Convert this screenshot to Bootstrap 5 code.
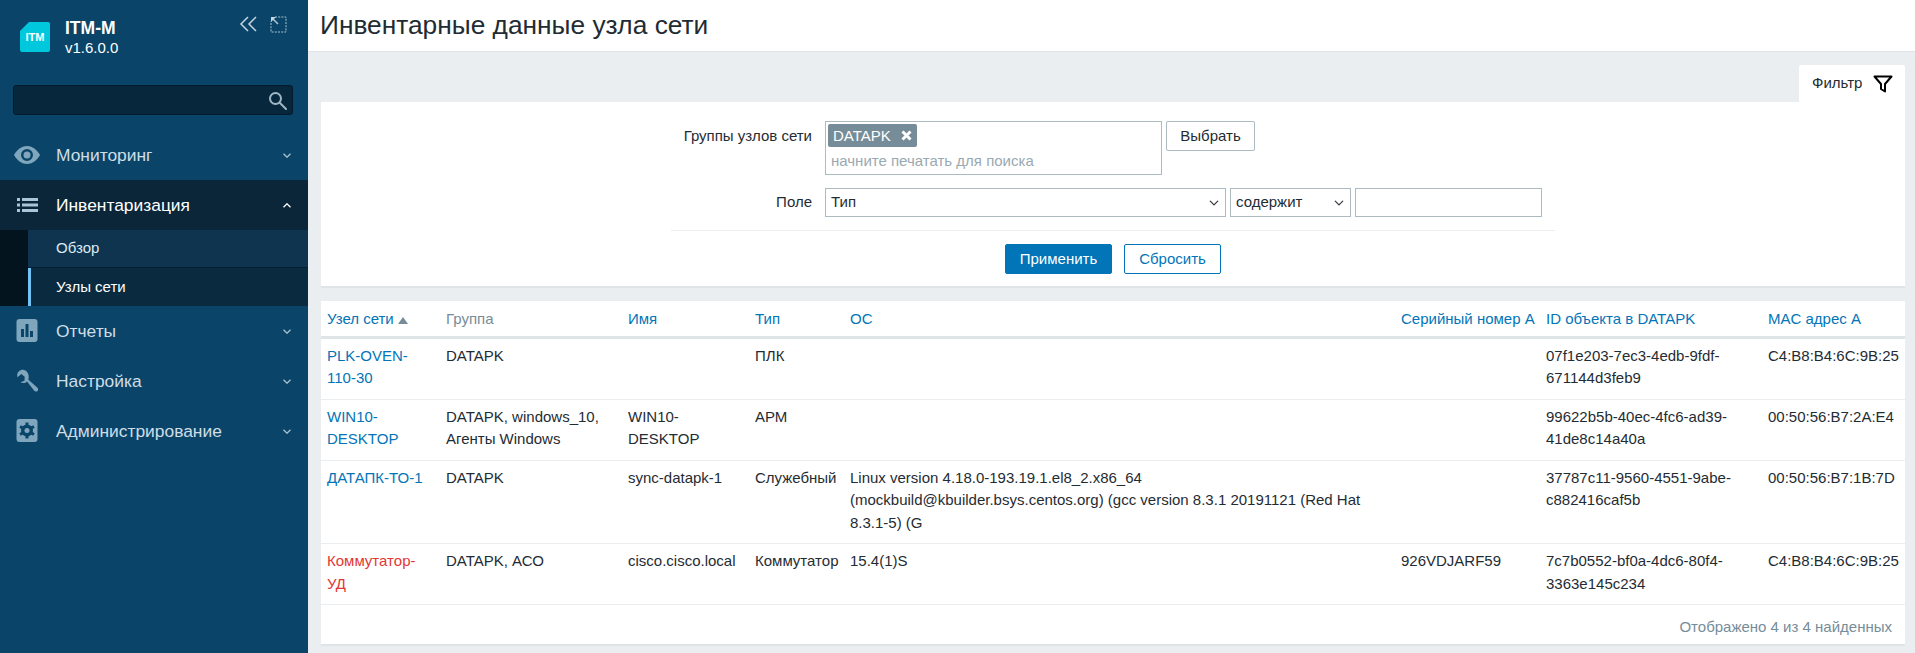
<!DOCTYPE html>
<html lang="ru">
<head>
    <meta charset="UTF-8">
    <meta name="viewport" content="width=device-width, initial-scale=1.0">
    <title>Инвентарные данные узла сети</title>
    <link rel="stylesheet" href="https://cdn.jsdelivr.net/npm/bootstrap@5.3.2/dist/css/bootstrap.min.css">
    <style>
        html, body { height: 100%; }
        body {
            font-family: "Liberation Sans", Arial, sans-serif;
            font-size: 15px;
            color: #1f2c33;
            background: #ebeef0;
            overflow: hidden;
        }
        /* sidebar */
        .side {
            width: 308px;
            flex: 0 0 308px;
            background: #0a4569;
            color: #fff;
        }
        .side-top { height: 85px; padding: 22px 20px 0; position: relative; }
        .logo-box {
            width: 30px;
            height: 30px;
            background: #00c8dc;
            color: #fff;
            font-size: 11px;
            font-weight: 700;
            border-radius: 2px;
            clip-path: polygon(30% 0, 100% 0, 100% 100%, 0 100%, 0 30%);
            padding-top: 8px;
            line-height: 14px;
        }
        .brand-txt { line-height: 19px; margin-left: 15px; margin-top: -3px; font-size: 15px; }
        .brand-txt b { font-size: 17.5px; }
        .side-tools { position: absolute; top: 16px; left: 239px; gap: 12px; }
        .side-search {
            height: 30px;
            margin: 0 13px 0 13px;
            background: #07283c;
            border: 1px solid #041a28;
            border-radius: 3px;
            padding-right: 5px;
            width: 280px;
        }
        .side-menu { margin-top: 15px; }
        .menu-item {
            height: 50px;
            padding-left: 13px;
            padding-right: 17px;
            font-size: 17.4px;
            color: #cfdde6;
        }
        .menu-item.opened { background: #0a2638; color: #fff; }
        .menu-ico { width: 28px; height: 24px; margin-right: 15px; flex: none; }
        .sub-wrap { background: #04141f; padding-left: 28px; }
        .sub-item {
            height: 38px;
            padding-left: 28px;
            background: #0e3450;
            color: #dfeaf1;
            border-bottom: 1px solid #06202f;
        }
        .sub-item.current {
            background: #0a2a40;
            color: #fff;
            border-bottom: 0;
            border-left: 3px solid #73c2f5;
            padding-left: 25px;
        }
        /* content */
        .page-head {
            height: 52px;
            background: #fff;
            border-bottom: 1px solid #dfe4e7;
            padding-left: 12px;
        }
        .page-head h1 { font-size: 26.3px; font-weight: 400; margin: 0; color: #1f2c33; }
        .page-body { padding: 13px 10px 0 13px; }
        .filter-tab {
            width: 106px;
            height: 37px;
            background: #fff;
            border-radius: 2px 2px 0 0;
            padding-left: 13px;
            gap: 11px;
        }
        .filter-panel {
            height: 186px;
            background: #fff;
            border-bottom: 2px solid #dfe4e7;
            padding-top: 19px;
        }
        .filter-inner { width: 884px; }
        .f-label { width: 141px; margin-right: 13px; text-align: right; flex: none; }
        .multi-box {
            width: 337px;
            height: 54px;
            border: 1px solid #acbbc2;
            padding: 2px;
        }
        .tag-item {
            background: #768d99;
            color: #fff;
            font-size: 15px;
            font-weight: 400;
            border-radius: 2px;
            height: 23px;
            line-height: 23px;
            padding: 0 5px;
            width: 89px;
        }
        .multi-hint { color: #9aa9b1; padding: 6px 3px 0; line-height: 16px; }
        .pick-btn {
            width: 89px;
            height: 30px;
            margin-left: 4px;
            padding: 0;
            font-size: 15px;
            color: #1f2c33;
            border: 1px solid #acbbc2;
            border-radius: 2px;
            background: #fff;
        }
        .field-row { margin-top: 13px; padding-bottom: 13px; border-bottom: 1px solid #ebeef0; }
        .field-ctl {
            height: 29px;
            border: 1px solid #acbbc2;
            border-radius: 0;
            font-size: 15px;
            color: #1f2c33;
            padding: 0 20px 0 5px;
            background-size: 12px 10px;
            background-position: right 5px center;
        }
        .ctl-a { width: 401px; }
        .ctl-b { width: 121px; margin-left: 4px; }
        .ctl-c { width: 187px; margin-left: 4px; padding-right: 4px; }
        .act-row { margin-top: 13px; gap: 12px; }
        .act-btn { height: 30px; padding: 0; font-size: 15px; border-radius: 2px; }
        .act-apply { width: 107px; background: #0275b8; border: 1px solid #0275b8; color: #fff; }
        .act-reset { width: 97px; background: #fff; border: 1px solid #0275b8; color: #0275b8; }
        /* table */
        .data-card {
            margin-top: 13px;
            height: 345px;
            background: #fff;
            border-bottom: 2px solid #dfe4e7;
        }
        .inv-table { table-layout: fixed; width: 1584px; margin: 0; font-size: 15px; --bs-table-color: #1f2c33; }
        .inv-table th {
            font-weight: 400;
            height: 36px;
            padding: 1px 6px 0;
            vertical-align: middle;
            border-bottom: 3px solid #dfe4e7;
            color: #0275b8;
            white-space: nowrap;
        }
        .inv-table td {
            padding: 6px 6px 9px;
            line-height: 22.5px;
            vertical-align: top;
            border-bottom: 1px solid #ebeef0;
        }
        .inv-table a { color: #0275b8; text-decoration: none; }
        .inv-table a.host-bad { color: #e33734; }
        .th-muted { color: #768d99 !important; }
        .sort-up {
            display: inline-block;
            border: 5px solid transparent;
            border-top: 0;
            border-bottom: 7px solid #768d99;
            margin-left: 4px;
        }
        .w-host { width: 119px; }
        .w-group { width: 182px; }
        .w-name { width: 127px; }
        .w-type { width: 95px; }
        .w-os { width: 551px; }
        .w-serial { width: 145px; }
        .w-id { width: 222px; }
        .w-mac { width: 143px; }
        .tbl-foot { color: #768d99; text-align: right; padding: 12px 13px 0 0; line-height: 20px; }
    </style>
</head>
<body>
<div class="d-flex h-100">
    <aside class="side">
        <div class="side-top d-flex">
            <div class="logo-box text-center">ITM</div>
            <div class="brand-txt"><b>ITM-M</b><br>v1.6.0.0</div>
            <div class="side-tools d-flex">
                <svg width="19" height="16" viewBox="0 0 19 16" fill="none" stroke="#c3d5e0" stroke-width="1.5"><path d="M9 1 2 8l7 7M17 1l-7 7 7 7"/></svg>
                <svg width="17" height="17" viewBox="0 0 17 17" fill="none" stroke="#a9c1cf"><path d="M5 1h11v15H1V5" stroke-dasharray="2 1.2"/><path d="M2 2l6 6" stroke-width="1.6"/><path d="M1 1h5L1 6z" fill="#c3d5e0" stroke="none"/></svg>
            </div>
        </div>
        <div class="side-search d-flex align-items-center justify-content-end">
            <svg width="19" height="19" viewBox="0 0 19 19" fill="none" stroke="#9db7c6" stroke-width="2"><circle cx="7.500" cy="7.500" r="5.500"/><path d="m12 12 6 6" stroke-linecap="round"/></svg>
        </div>
        <div class="side-menu">
            <div class="menu-item d-flex align-items-center">
                <svg class="menu-ico" viewBox="0 0 26 24" fill="#7fa6bd"><path d="M13 3C7 3 2.500 7.500 0 12c2.500 4.500 7 9 13 9s10.500-4.500 13-9c-2.500-4.500-7-9-13-9zm0 15a6 6 0 1 1 0-12 6 6 0 0 1 0 12z"/><circle cx="13" cy="12" r="3.500"/></svg>
                <span class="flex-grow-1">Мониторинг</span>
                <svg width="8" height="5" viewBox="0 0 8 5" fill="none" stroke="#a9c1cf" stroke-width="1.300"><path d="m.5.700 3.500 3.500L7.500.7"/></svg>
            </div>
            <div class="menu-item opened d-flex align-items-center">
                <svg class="menu-ico" viewBox="0 0 26 24" fill="#a9c6d8"><path d="M3 5h3v3H3zM3 10.500h3v3H3zM3 16h3v3H3zM8 5h16v3H8zM8 10.500h16v3H8zM8 16h16v3H8z"/></svg>
                <span class="flex-grow-1">Инвентаризация</span>
                <svg width="8" height="5" viewBox="0 0 8 5" fill="none" stroke="#fff" stroke-width="1.300"><path d="M.5 4.300 4 .8l3.500 3.500"/></svg>
            </div>
            <div class="sub-wrap">
                <div class="sub-item d-flex align-items-center">Обзор</div>
                <div class="sub-item current d-flex align-items-center">Узлы сети</div>
            </div>
            <div class="menu-item d-flex align-items-center">
                <svg class="menu-ico" viewBox="0 0 26 24"><rect x="2.500" y="0" width="21" height="23" rx="3" fill="#7fa6bd"/><path fill="#0a4569" d="M7 10h3v8H7zM11.500 5h3v13h-3zM16 12h3v6h-3z"/></svg>
                <span class="flex-grow-1">Отчеты</span>
                <svg width="8" height="5" viewBox="0 0 8 5" fill="none" stroke="#a9c1cf" stroke-width="1.300"><path d="m.5.700 3.500 3.500L7.500.7"/></svg>
            </div>
            <div class="menu-item d-flex align-items-center">
                <svg class="menu-ico" viewBox="0 0 26 24" fill="#7fa6bd"><path d="M10 1c-3.500-.8-7 2-6.800 5.800l.2 1.500 4-3.300 3.300 2.800-.2 4-4 1.500c2 1.300 4.600 1 6.600-.7L20 21.500c1 1.200 2.500 1.400 3.500.4s.8-2.500-.3-3.500l-8.800-7.700C15.500 6.500 14 2 10 1z"/></svg>
                <span class="flex-grow-1">Настройка</span>
                <svg width="8" height="5" viewBox="0 0 8 5" fill="none" stroke="#a9c1cf" stroke-width="1.300"><path d="m.5.700 3.500 3.500L7.500.7"/></svg>
            </div>
            <div class="menu-item d-flex align-items-center">
                <svg class="menu-ico" viewBox="0 0 26 24"><rect x="2.500" y="0" width="21" height="23" rx="3" fill="#7fa6bd"/><circle cx="13" cy="11.500" r="6" fill="#0a4569"/><path stroke="#0a4569" stroke-width="3" d="M13 3.500v16M6 7.500l14 8M6 15.500l14-8"/><circle cx="13" cy="11.500" r="2.500" fill="#7fa6bd"/></svg>
                <span class="flex-grow-1">Администрирование</span>
                <svg width="8" height="5" viewBox="0 0 8 5" fill="none" stroke="#a9c1cf" stroke-width="1.300"><path d="m.5.700 3.500 3.500L7.500.7"/></svg>
            </div>
        </div>
    </aside>

    <main class="flex-grow-1">
        <div class="page-head d-flex align-items-center">
            <h1>Инвентарные данные узла сети</h1>
        </div>
        <div class="page-body">
            <div class="d-flex justify-content-end">
                <div class="filter-tab d-flex align-items-center">
                    <span>Фильтр</span>
                    <svg width="20" height="18" viewBox="0 0 20 18" fill="none" stroke="#000" stroke-width="2" stroke-linejoin="round"><path d="M1.500 1.500h17l-6.500 7.500v7.500l-4-2.500V9z"/></svg>
                </div>
            </div>
            <div class="filter-panel">
                <div class="filter-inner mx-auto">
                    <div class="d-flex">
                        <div class="f-label pt-1">Группы узлов сети</div>
                        <div class="multi-box">
                            <span class="tag-item d-flex align-items-center justify-content-between">DATAPK
                                <svg width="11" height="11" viewBox="0 0 11 11" stroke="#fff" stroke-width="3"><path d="m1.500 1.500 8 8M9.500 1.500l-8 8"/></svg>
                            </span>
                            <div class="multi-hint">начните печатать для поиска</div>
                        </div>
                        <button type="button" class="btn pick-btn">Выбрать</button>
                    </div>
                    <div class="field-row d-flex align-items-center">
                        <div class="f-label">Поле</div>
                        <select class="form-select field-ctl ctl-a"><option>Тип</option></select>
                        <select class="form-select field-ctl ctl-b"><option>содержит</option></select>
                        <input type="text" class="form-control field-ctl ctl-c">
                    </div>
                    <div class="act-row d-flex justify-content-center">
                        <button type="button" class="btn act-btn act-apply">Применить</button>
                        <button type="button" class="btn act-btn act-reset">Сбросить</button>
                    </div>
                </div>
            </div>

            <div class="data-card">
                <table class="table inv-table">
                    <colgroup>
                        <col class="w-host"><col class="w-group"><col class="w-name"><col class="w-type">
                        <col class="w-os"><col class="w-serial"><col class="w-id"><col class="w-mac">
                    </colgroup>
                    <thead>
                        <tr>
                            <th>Узел сети<span class="sort-up"></span></th>
                            <th class="th-muted">Группа</th>
                            <th>Имя</th>
                            <th>Тип</th>
                            <th>ОС</th>
                            <th>Серийный номер А</th>
                            <th>ID объекта в DATAPK</th>
                            <th>MAC адрес A</th>
                        </tr>
                    </thead>
                    <tbody>
                        <tr>
                            <td><a href="#">PLK-OVEN-110-30</a></td>
                            <td>DATAPK</td>
                            <td></td>
                            <td>ПЛК</td>
                            <td></td>
                            <td></td>
                            <td>07f1e203-7ec3-4edb-9fdf-671144d3feb9</td>
                            <td>C4:B8:B4:6C:9B:25</td>
                        </tr>
                        <tr>
                            <td><a href="#">WIN10-DESKTOP</a></td>
                            <td>DATAPK, windows_10, Агенты Windows</td>
                            <td>WIN10-DESKTOP</td>
                            <td>АРМ</td>
                            <td></td>
                            <td></td>
                            <td>99622b5b-40ec-4fc6-ad39-41de8c14a40a</td>
                            <td>00:50:56:B7:2A:E4</td>
                        </tr>
                        <tr>
                            <td><a href="#">ДАТАПК-ТО-1</a></td>
                            <td>DATAPK</td>
                            <td>sync-datapk-1</td>
                            <td>Служебный</td>
                            <td>Linux version 4.18.0-193.19.1.el8_2.x86_64<br>(mockbuild@kbuilder.bsys.centos.org) (gcc version 8.3.1 20191121 (Red Hat<br>8.3.1-5) (G</td>
                            <td></td>
                            <td>37787c11-9560-4551-9abe-c882416caf5b</td>
                            <td>00:50:56:B7:1B:7D</td>
                        </tr>
                        <tr>
                            <td><a href="#" class="host-bad">Коммутатор-УД</a></td>
                            <td>DATAPK, АСО</td>
                            <td>cisco.cisco.local</td>
                            <td>Коммутатор</td>
                            <td>15.4(1)S</td>
                            <td>926VDJARF59</td>
                            <td>7c7b0552-bf0a-4dc6-80f4-3363e145c234</td>
                            <td>C4:B8:B4:6C:9B:25</td>
                        </tr>
                    </tbody>
                </table>
                <div class="tbl-foot">Отображено 4 из 4 найденных</div>
            </div>
        </div>
    </main>
</div>
<script src="https://cdn.jsdelivr.net/npm/bootstrap@5.3.2/dist/js/bootstrap.bundle.min.js"></script>
</body>
</html>
